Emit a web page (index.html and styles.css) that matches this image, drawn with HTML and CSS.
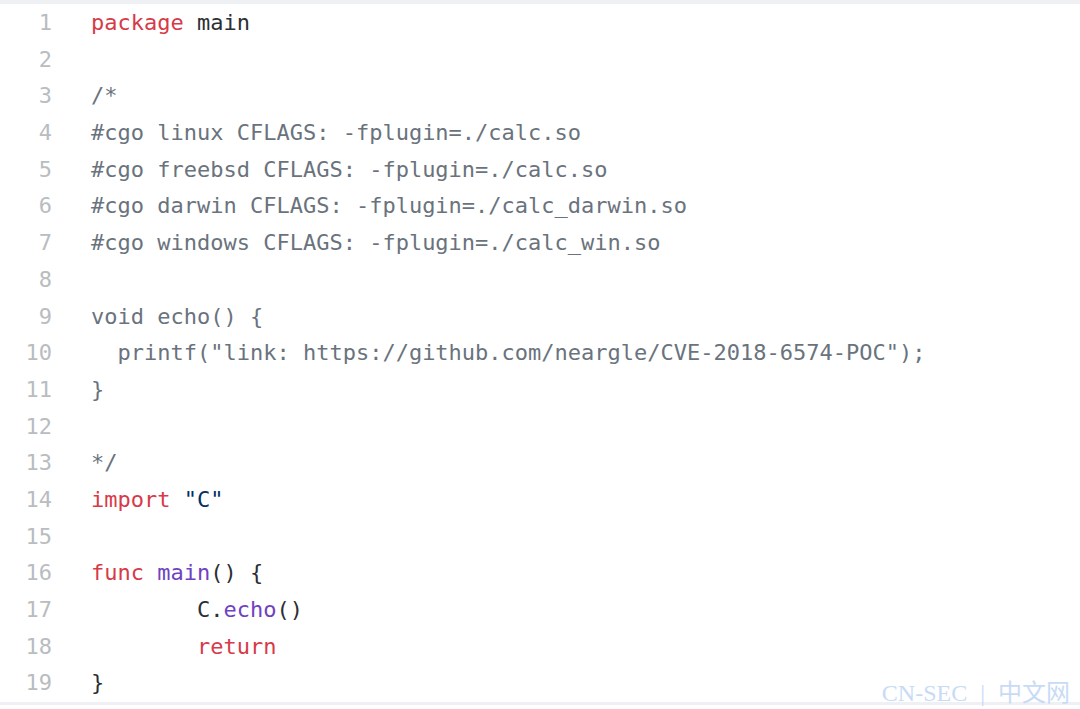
FILE: index.html
```html
<!DOCTYPE html>
<html>
<head>
<meta charset="utf-8">
<link rel="stylesheet" href="styles.css">
</head>
<body>
<div class="frame">
  <div class="code">
    <div class="row"><span class="ln">1</span><span class="src"><span class="kw">package</span> main</span></div>
    <div class="row"><span class="ln">2</span><span class="src"></span></div>
    <div class="row"><span class="ln">3</span><span class="src cm">/*</span></div>
    <div class="row"><span class="ln">4</span><span class="src cm">#cgo linux CFLAGS: -fplugin=./calc.so</span></div>
    <div class="row"><span class="ln">5</span><span class="src cm">#cgo freebsd CFLAGS: -fplugin=./calc.so</span></div>
    <div class="row"><span class="ln">6</span><span class="src cm">#cgo darwin CFLAGS: -fplugin=./calc_darwin.so</span></div>
    <div class="row"><span class="ln">7</span><span class="src cm">#cgo windows CFLAGS: -fplugin=./calc_win.so</span></div>
    <div class="row"><span class="ln">8</span><span class="src cm"></span></div>
    <div class="row"><span class="ln">9</span><span class="src cm">void echo() {</span></div>
    <div class="row"><span class="ln">10</span><span class="src cm">  printf("link: https://github.com/neargle/CVE-2018-6574-POC");</span></div>
    <div class="row"><span class="ln">11</span><span class="src cm">}</span></div>
    <div class="row"><span class="ln">12</span><span class="src cm"></span></div>
    <div class="row"><span class="ln">13</span><span class="src cm">*/</span></div>
    <div class="row"><span class="ln">14</span><span class="src"><span class="kw">import</span> <span class="str">"C"</span></span></div>
    <div class="row"><span class="ln">15</span><span class="src"></span></div>
    <div class="row"><span class="ln">16</span><span class="src"><span class="kw">func</span> <span class="fn">main</span>() {</span></div>
    <div class="row"><span class="ln">17</span><span class="src">	C.<span class="fn">echo</span>()</span></div>
    <div class="row"><span class="ln">18</span><span class="src">	<span class="kw">return</span></span></div>
    <div class="row"><span class="ln">19</span><span class="src">}</span></div>
  </div>
  <div class="watermark">CN-SEC <span class="bar">|</span> 中文网</div>
</div>
</body>
</html>
```

FILE: styles.css
```css
html, body {
  margin: 0;
  padding: 0;
  background: #ffffff;
}

.frame {
  position: relative;
  width: 1080px;
  height: 709px;
  box-sizing: border-box;
  border-top: 4px solid #eef0f4;
  overflow: hidden;
}

.code {
  padding-top: 1px;
  border-bottom: 3px solid #eef0f4;
  font-family: "DejaVu Sans Mono", "Liberation Mono", monospace;
  font-size: 22px;
  line-height: 36.7px;
  color: #2b2f33;
}

.row {
  display: flex;
  height: 36.7px;
}

.ln {
  flex: 0 0 52px;
  text-align: right;
  color: #b9bcc0;
}

.src {
  margin-left: 39px;
  white-space: pre;
  tab-size: 8;
  -moz-tab-size: 8;
}

.kw { color: #d73a49; }
.fn { color: #6f42c1; }
.str { color: #032f62; }
.cm { color: #6a737d; }

.watermark {
  position: absolute;
  right: 10px;
  bottom: 1px;
  font-family: "Liberation Serif", "Noto Sans CJK SC", serif;
  font-size: 24px;
  color: #c8dbf6;
  white-space: pre;
}

.bar {
  margin: 0 7px;
}
```
